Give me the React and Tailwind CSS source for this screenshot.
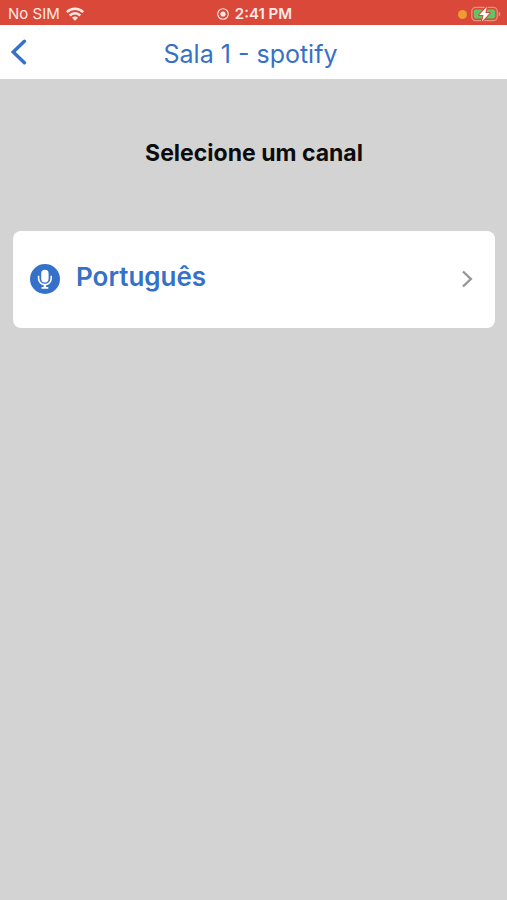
function WifiIcon() {
  return (
    <svg viewBox="0 0 18 14" className="h-3.5 w-[18px]" fill="none" stroke="currentColor" strokeWidth="2.5" aria-hidden="true">
      <path d="M0.8 5.1a11.8 11.8 0 0 1 16.4 0" />
      <path d="M3.7 8.5a7.6 7.6 0 0 1 10.6 0" />
      <path d="M9 13.8 6 10.8a4.2 4.2 0 0 1 6 0z" fill="currentColor" stroke="none" />
    </svg>
  );
}

function RecordIcon() {
  return (
    <svg viewBox="0 0 12 12" className="size-3" fill="none" aria-hidden="true">
      <circle cx="6" cy="6" r="5.3" stroke="currentColor" strokeWidth="1.1" />
      <circle cx="6" cy="6" r="2.6" fill="currentColor" />
    </svg>
  );
}

function BatteryIcon() {
  return (
    <svg viewBox="0 0 30 16" className="h-4 w-[30px]" fill="none" aria-hidden="true">
      <rect x="0.8" y="1.4" width="25.4" height="13.2" rx="3.8" stroke="#ec8f83" strokeWidth="1.2" />
      <rect x="2.8" y="3.4" width="21.4" height="9.2" rx="1.8" fill="#61c566" />
      <path d="M27.6 5.7c2.4.6 2.4 4 0 4.6z" fill="#ec8f83" />
      <path d="M15.8.8 8.2 9h4.4l-1.6 6.4L18.8 7h-4.4z" fill="#fff" stroke="#d94838" strokeWidth="2" paintOrder="stroke" strokeLinejoin="round" />
    </svg>
  );
}

function MicBadge() {
  return (
    <svg viewBox="0 0 30 30" className="size-[30px] shrink-0" fill="none" aria-hidden="true">
      <circle cx="15" cy="15" r="15" fill="#3571c8" />
      <rect x="11.2" y="5.8" width="7.4" height="12.6" rx="3.7" fill="#fff" />
      <path d="M8.6 11.8v2.8a6.3 6 0 0 0 12.6 0v-2.8" stroke="#fff" strokeWidth="1.6" />
      <path d="M13.7 20.4h2.4v2.6h2.2v1.8h-6.8V23h2.2z" fill="#fff" />
    </svg>
  );
}

export default function App() {
  return (
    <div className="flex min-h-screen flex-col bg-[#d3d3d3] font-[Inter,'Liberation_Sans',sans-serif]">
      <div className="grid h-[25px] grid-cols-[1fr_auto_1fr] items-center bg-[#d94838] pt-1 pr-1.5 pb-0.5 pl-2 text-sm text-[#ffe9e5]">
        <div className="flex items-center gap-1.5">
          <span className="text-[15px] leading-5">No SIM</span>
          <WifiIcon />
        </div>
        <div className="flex items-center gap-1.5 font-semibold">
          <RecordIcon />
          <span className="text-[15px] leading-5">2:41 PM</span>
        </div>
        <div className="flex items-center justify-end gap-1">
          <span className="size-[9px] rounded-full bg-[#f09a37]" />
          <BatteryIcon />
        </div>
      </div>

      <header className="grid h-[54px] grid-cols-[40px_1fr_46px] items-center bg-white text-[#3571c8]">
        <button type="button" aria-label="Voltar" className="flex h-full items-center pl-2.5">
          <svg viewBox="0 0 18 26" className="h-[26px] w-[18px]" fill="none" stroke="currentColor" strokeWidth="3.4" strokeLinecap="round" strokeLinejoin="miter" aria-hidden="true">
            <path d="M14.4 2.2 3.2 13l11.2 10.8" />
          </svg>
        </button>
        <h1 className="pt-1 text-center text-[25px] leading-8">Sala 1 - spotify</h1>
      </header>

      <main className="pt-14 pr-3 pl-[13px]">
        <h2 className="pt-0.5 text-center text-[23px] leading-8 font-bold text-[#0c0c0c]">Selecione um canal</h2>
        <button type="button" className="mt-[62px] flex h-[97px] w-full items-center rounded-lg bg-white pr-[22px] pb-0.5 pl-[17px] text-left">
          <MicBadge />
          <span className="ml-4 flex-1 pb-1 text-[26px] leading-8 font-semibold text-[#3571c8]">Português</span>
          <svg viewBox="0 0 12 18" className="h-[18px] w-3" fill="none" stroke="#969696" strokeWidth="2.4" aria-hidden="true">
            <path d="m2 1.5 7.8 7.5L2 16.5" />
          </svg>
        </button>
      </main>
    </div>
  );
}
